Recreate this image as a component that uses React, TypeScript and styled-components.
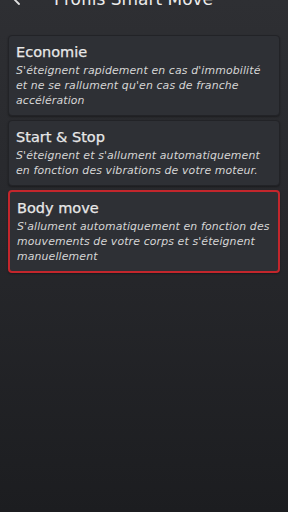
import styled, { createGlobalStyle } from 'styled-components'

const Global = createGlobalStyle`
  html, body {
    margin: 0;
    padding: 0;
    background: #1b1c1f;
  }
  * { box-sizing: border-box; }
`

const Screen = styled.div`
  width: 288px;
  height: 512px;
  overflow: hidden;
  background: linear-gradient(180deg, #2e2f33 0%, #27282c 45%, #1c1d20 100%);
  font-family: 'DejaVu Sans', 'Open Sans', sans-serif;
  color: #e6e6e6;
`

const Header = styled.header`
  display: flex;
  align-items: center;
  gap: 26px;
  height: 36px;
  margin-top: -19px;
  padding-left: 12px;
`

const Title = styled.h1`
  margin: 0;
  font-size: 17px;
  font-weight: normal;
  color: #ececec;
`

const List = styled.div`
  display: flex;
  flex-direction: column;
  gap: 4px;
  padding: 18px 8px 0 8px;
`

const Card = styled.div<{ $active?: boolean }>`
  background: #2e3035;
  border: ${p => (p.$active ? '2px solid #c3262c' : '1.5px solid #222327')};
  border-radius: 4px;
  padding: 7px 7px 7px 7px;
  box-shadow: 0 1px 2px rgba(0, 0, 0, 0.35);
`

const CardTitle = styled.div`
  font-size: 14.5px;
  color: #e8e8e8;
  line-height: 19px;
  margin-bottom: 1px;
  -webkit-text-stroke: 0.25px #e8e8e8;
`

const CardText = styled.p`
  margin: 0;
  font-size: 10.9px;
  font-style: italic;
  line-height: 15px;
  letter-spacing: 0.13px;
  color: #d6d6d6;
`

const profiles = [
  {
    name: 'Economie',
    text: "S'éteignent rapidement en cas d'immobilité et ne se rallument qu'en cas de franche accélération",
  },
  {
    name: 'Start & Stop',
    text: "S'éteignent et s'allument automatiquement en fonction des vibrations de votre moteur.",
  },
  {
    name: 'Body move',
    text: "S'allument automatiquement en fonction des mouvements de votre corps et s'éteignent manuellement",
    active: true,
  },
]

function BackArrow() {
  return (
    <svg width="16" height="16" viewBox="0 0 16 16" fill="none" stroke="#e0e0e0" strokeWidth="1.8" strokeLinecap="round">
      <path d="M14 8H2M7 3L2 8l5 5" />
    </svg>
  )
}

export default function App() {
  return (
    <Screen>
      <Global />
      <Header>
        <BackArrow />
        <Title>Profils Smart Move</Title>
      </Header>
      <List>
        {profiles.map(p => (
          <Card key={p.name} $active={p.active}>
            <CardTitle>{p.name}</CardTitle>
            <CardText>{p.text}</CardText>
          </Card>
        ))}
      </List>
    </Screen>
  )
}
